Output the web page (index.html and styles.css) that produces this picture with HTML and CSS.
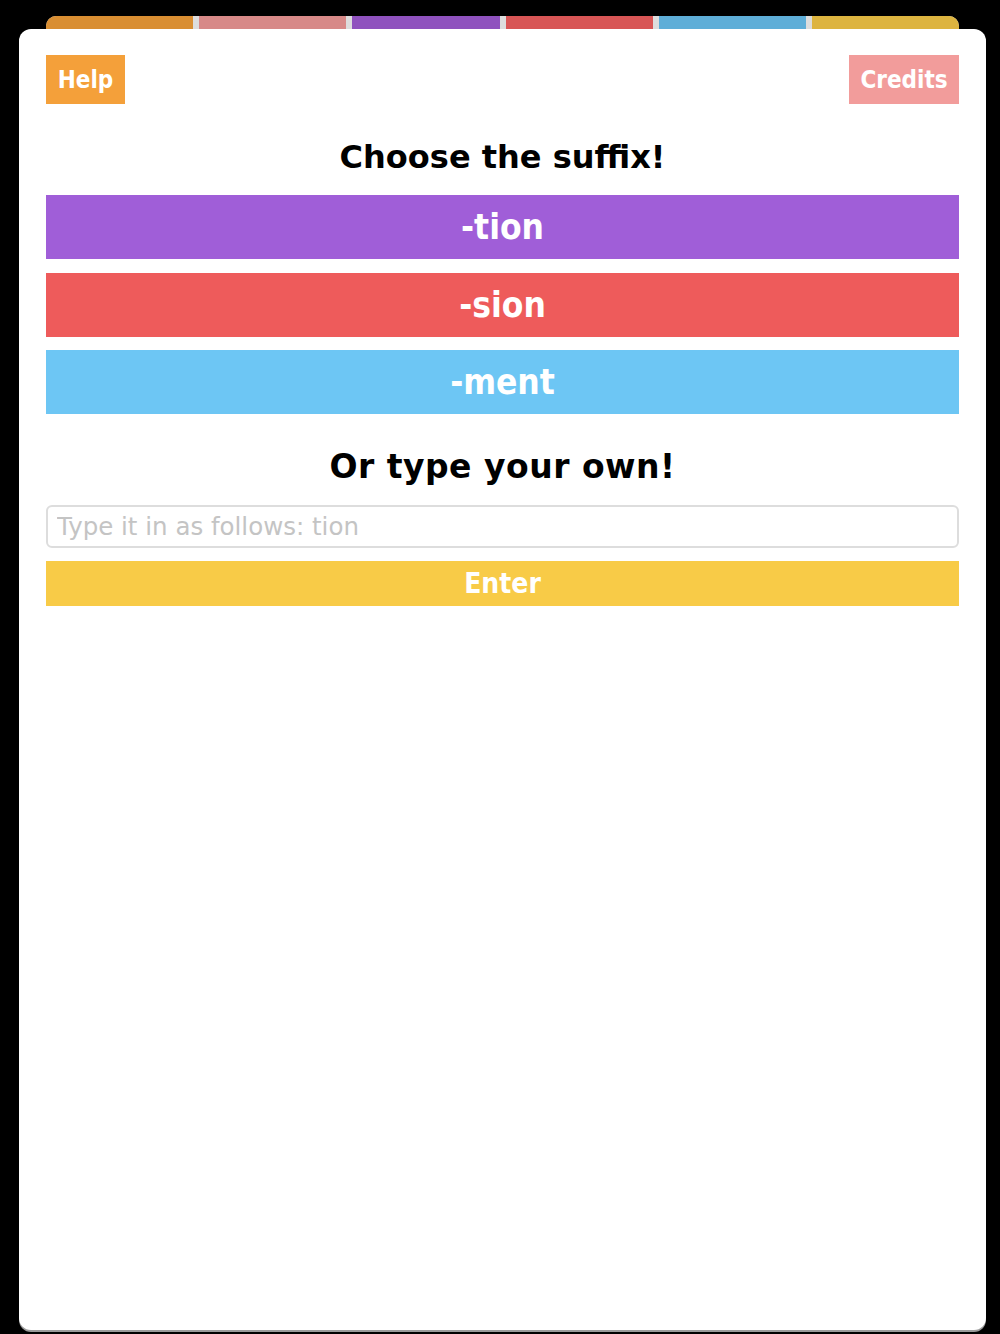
FILE: index.html
```html
<!DOCTYPE html>
<html lang="en">
<head>
    <meta charset="UTF-8">
    <meta name="viewport" content="width=device-width, initial-scale=1.0">
    <title>Suffix</title>
    <link rel="stylesheet" href="styles.css">
</head>
<body>
    <div class="tabs">
        <span class="tab tab-orange"></span>
        <span class="tab tab-pink"></span>
        <span class="tab tab-purple"></span>
        <span class="tab tab-red"></span>
        <span class="tab tab-blue"></span>
        <span class="tab tab-yellow"></span>
    </div>

    <main class="card">
        <div class="top-row">
            <a href="#help" class="small-btn help">Help</a>
            <a href="#credits" class="small-btn credits">Credits</a>
        </div>

        <h2 class="title">Choose the suffix!</h2>
        <div class="choices">
            <button class="choice purple">-tion</button>
            <button class="choice red">-sion</button>
            <button class="choice blue">-ment</button>
        </div>

        <h2 class="title title-own">Or type your own!</h2>
        <input class="answer" type="text" placeholder="Type it in as follows: tion">
        <button class="enter">Enter</button>
    </main>
</body>
</html>
```

FILE: styles.css
```css
/* General styles */
body {
    font-family: "DejaVu Sans", sans-serif;
    margin: 0;
    padding: 0;
    background-color: #000;
    height: 1334px;
    overflow: hidden;
}

.tabs {
    display: flex;
    gap: 6px;
    width: 913px;
    height: 13px;
    margin: 16px 0 0 46px;
    background-color: #ddd;
    border-radius: 10px 10px 0 0;
    overflow: hidden;
}

.tab {
    flex: 1;
}

.tab-orange { background-color: #D98E32; }
.tab-pink { background-color: #D78988; }
.tab-purple { background-color: #8F52BE; }
.tab-red { background-color: #D85555; }
.tab-blue { background-color: #5EAED8; }
.tab-yellow { background-color: #DDB440; }

.card {
    box-sizing: border-box;
    width: 967px;
    height: 1301px;
    margin-left: 19px;
    padding: 26px 27px;
    background-color: #fff;
    border-radius: 12px;
    box-shadow: 0 2px 0 #9a9a9a;
}

.top-row {
    display: flex;
    justify-content: space-between;
}

.small-btn {
    display: flex;
    justify-content: center;
    align-items: center;
    height: 49px;
    color: white;
    text-decoration: none;
    font-family: "DejaVu Sans Condensed", "DejaVu Sans", sans-serif;
    font-weight: bold;
    font-size: 24px;
}

.help {
    width: 79px;
    background-color: #F4A03A;
}

.credits {
    width: 110px;
    background-color: #F29C9B;
}

.title {
    margin: 32px 0 17px;
    height: 42px;
    line-height: 42px;
    text-align: center;
    font-size: 32px;
    font-weight: bold;
    color: #000;
}

.choices {
    display: flex;
    flex-direction: column;
    gap: 13.5px;
}

.choice,
.enter {
    display: block;
    width: 100%;
    border: none;
    margin: 0;
    padding: 0;
    color: white;
    font-family: "DejaVu Sans Condensed", "DejaVu Sans", sans-serif;
    font-weight: bold;
    cursor: pointer;
}

.choice {
    height: 64px;
    font-size: 35px;
}

.purple { background-color: #A05ED8; }
.red { background-color: #EE5B5B; }
.blue { background-color: #6DC6F4; }

.title-own {
    margin-top: 32px;
    font-size: 33px;
    letter-spacing: 0.5px;
}

.answer {
    display: block;
    box-sizing: border-box;
    width: 100%;
    height: 43px;
    margin: 0;
    padding: 0 9px;
    border: 2px solid #ddd;
    border-radius: 6px;
    font-family: "DejaVu Sans", sans-serif;
    font-size: 24.5px;
    outline: none;
}

.answer::placeholder {
    color: #c4c4c4;
}

.enter {
    height: 45px;
    margin-top: 13px;
    font-size: 28px;
    background-color: #F8CB47;
}
```
